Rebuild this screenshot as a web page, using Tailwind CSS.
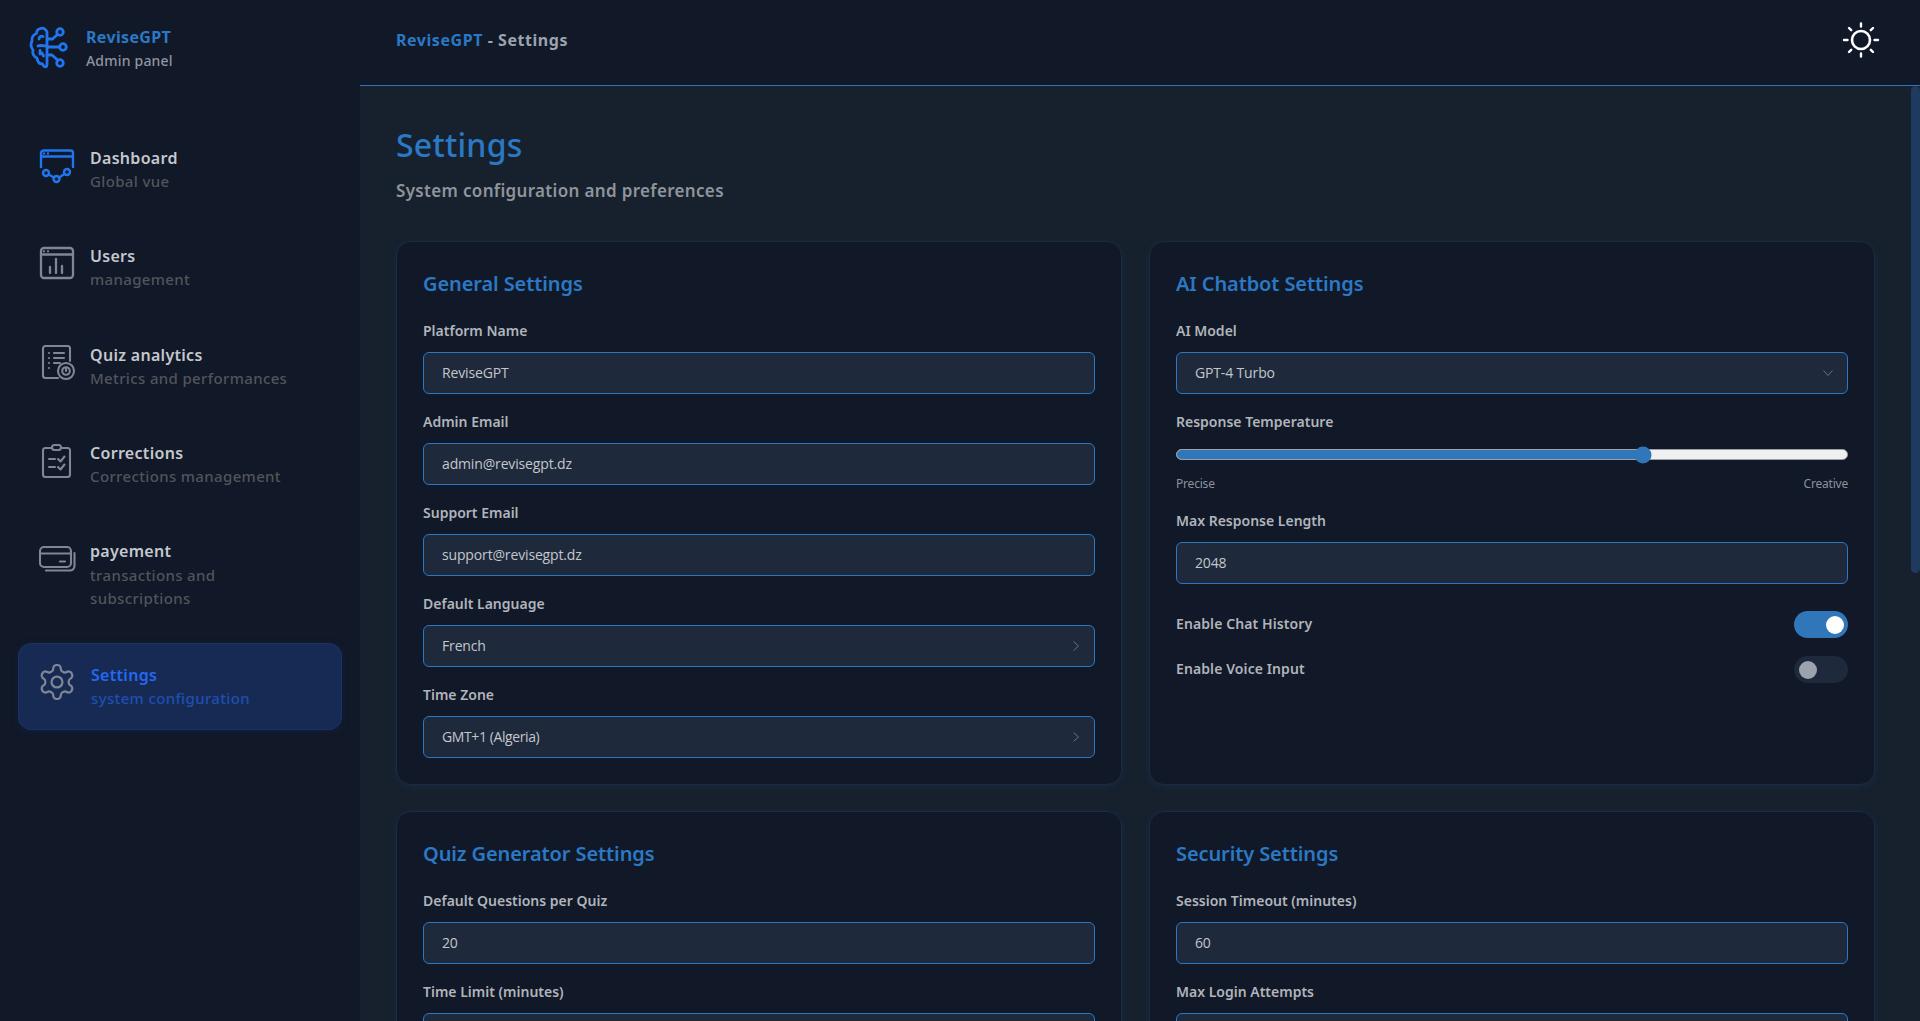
<!DOCTYPE html>
<html lang="en">
<head>
    <meta charset="UTF-8">
    <title>ReviseGPT - Settings</title>
    <script src="https://cdn.jsdelivr.net/npm/@tailwindcss/browser@4"></script>
</head>
<body class="h-screen overflow-hidden bg-[#111827] font-['Noto_Sans',sans-serif]">
<div class="flex h-full">

    <!-- Sidebar -->
    <aside class="w-[360px] shrink-0 h-full bg-[#111827]">
        <div class="flex items-start pl-[30px] pt-[26px] h-[126px]">
            <svg class="w-[38px] h-[44px] overflow-visible" viewBox="0 0 38 44" fill="none" stroke="#2176f0" stroke-width="2.800" stroke-linecap="round" stroke-linejoin="round">
                <path d="M17 6C16 3 13 1.500 10.500 2.500C8 3 6.500 5 6.500 7.500C3.500 8.500 1.500 11.500 2 15C.5 18 1 21.500 3 24C2 27.500 4 31 7 32C7.500 36 10 38 12.500 38C14 41.500 17 42 17 38V6Z"/>
                <path d="M9 13C9 10.500 11 9.500 13 10.500M8 20C10 19 12.500 19.500 17 20M10 28V24.500M13.500 30L12 27"/>
                <path d="M17 13H22.500L27.500 8.500M17 21H29.500M17 29H22L27.500 34"/>
                <circle cx="30" cy="6" r="3.300"/><circle cx="33" cy="21" r="3.300"/><circle cx="30" cy="37" r="3.300"/>
            </svg>
            <div class="ml-[18px] -mt-[1px]">
                <p class="text-[16px] leading-[24px] font-bold tracking-[0.35px] text-[#2b78c5]">ReviseGPT</p>
                <p class="text-[14px] leading-[23px] font-medium tracking-[0.2px] text-[#8f95a0]">Admin panel</p>
            </div>
        </div>

        <nav class="flex flex-col gap-[11px] px-[18px]">
            <a class="flex gap-[16px] pl-[20px] py-[20px]">
                <svg class="w-9 h-9 shrink-0 overflow-visible" viewBox="0 0 36 36" fill="none" stroke="#2176f0" stroke-width="2.400" stroke-linecap="round" stroke-linejoin="round">
                    <path d="M3 21V7A2.500 2.500 0 0 1 5.500 4.500H32.500A2.500 2.500 0 0 1 35 7V21M3 10.500H35"/>
                    <path d="M6 7.500h.01M10 7.500h.01"/>
                    <circle cx="8" cy="27" r="3"/><circle cx="18.500" cy="33" r="3"/><circle cx="29" cy="26" r="3"/>
                    <path d="M10.700 28.500L16 31.500M21 31.500L26.500 28"/>
                </svg>
                <div>
                    <p class="text-[16px] leading-[24px] font-semibold tracking-[0.3px] text-[#c4c8ce]">Dashboard</p>
                    <p class="text-[15px] leading-[23.300px] font-medium tracking-[0.35px] text-[#50555c]">Global vue</p>
                </div>
            </a>
            <a class="flex gap-[16px] pl-[20px] py-[20px]">
                <svg class="w-9 h-9 shrink-0 overflow-visible" viewBox="0 0 36 36" fill="none" stroke="#7f8694" stroke-width="2.300" stroke-linecap="round" stroke-linejoin="round">
                    <rect x="3" y="4" width="32" height="30" rx="3"/>
                    <path d="M3 10.500H35M6 7.300h.01M10 7.300h.01"/>
                    <path d="M12 29V23M18 29V15M24 29V22"/>
                </svg>
                <div>
                    <p class="text-[16px] leading-[24px] font-semibold tracking-[0.3px] text-[#c4c8ce]">Users</p>
                    <p class="text-[15px] leading-[23.300px] font-medium tracking-[0.35px] text-[#50555c]">management</p>
                </div>
            </a>
            <a class="flex gap-[16px] pl-[20px] py-[20px]">
                <svg class="w-9 h-9 shrink-0 overflow-visible" viewBox="0 0 36 36" fill="none" stroke="#7f8694" stroke-width="2.100" stroke-linecap="round" stroke-linejoin="round">
                    <path d="M20 35H7.500A2.500 2.500 0 0 1 5 32.500V5.500A2.500 2.500 0 0 1 7.500 3H29.500A2.500 2.500 0 0 1 32 5.500V18"/>
                    <path d="M11 10h.01M11 15h.01M11 20h.01M11 25h.01M16 10H26M16 15H26M16 20H22"/>
                    <circle cx="28" cy="28" r="8"/><circle cx="28" cy="28" r="3.800"/>
                    <path d="M28 25.500V28"/>
                </svg>
                <div>
                    <p class="text-[16px] leading-[24px] font-semibold tracking-[0.3px] text-[#c4c8ce]">Quiz analytics</p>
                    <p class="text-[15px] leading-[23.300px] font-medium tracking-[0.35px] text-[#50555c]">Metrics and performances</p>
                </div>
            </a>
            <a class="flex gap-[16px] pl-[20px] py-[20px]">
                <svg class="w-9 h-9 shrink-0 overflow-visible" viewBox="0 0 36 36" fill="none" stroke="#7f8694" stroke-width="2.100" stroke-linecap="round" stroke-linejoin="round">
                    <rect x="5" y="7" width="27" height="29" rx="2.500"/>
                    <rect x="14" y="4" width="9" height="5" rx="2.500" fill="#111827"/>
                    <path d="M11 18H17M11 26H17M20 18L22.500 20.500L26.500 15.500M20 26L22.500 28.500L26.500 23.500"/>
                </svg>
                <div>
                    <p class="text-[16px] leading-[24px] font-semibold tracking-[0.3px] text-[#c4c8ce]">Corrections</p>
                    <p class="text-[15px] leading-[23.300px] font-medium tracking-[0.35px] text-[#50555c]">Corrections management</p>
                </div>
            </a>
            <a class="flex gap-[16px] pl-[20px] pb-[22px]">
                <svg class="w-9 h-9 mt-[20px] shrink-0 overflow-visible" viewBox="0 0 36 36" fill="none" stroke="#7f8694" stroke-width="2.100" stroke-linecap="round" stroke-linejoin="round">
                    <rect x="2" y="8" width="31" height="20" rx="4"/>
                    <path d="M2 14.500H33M22 22.500H27M8 31.500H32A4.500 4.500 0 0 0 36.500 27V14"/>
                </svg>
                <div class="pt-[20px]">
                    <p class="text-[16px] leading-[24px] mb-[1px] font-semibold tracking-[0.3px] text-[#c4c8ce]">payement</p>
                    <p class="text-[15px] leading-[23.300px] font-medium tracking-[0.35px] text-[#50555c] w-[190px]">transactions and subscriptions</p>
                </div>
            </a>
            <a class="flex gap-[17px] pl-[19px] py-[19px] -mt-[1px] border border-[#1b3268] rounded-[13px] bg-[#172a54] shadow-[0_2px_8px_rgba(30,64,175,0.15)]">
                <svg class="w-9 h-9 shrink-0 overflow-visible" viewBox="0 0 36 36" fill="none" stroke="#7f8694" stroke-width="1.300" stroke-linecap="round" stroke-linejoin="round">
                    <g transform="translate(19 19) scale(1.7) translate(-12 -12)">
                        <path d="M12.220 2h-.44a2 2 0 0 0-2 2v.18a2 2 0 0 1-1 1.730l-.43.25a2 2 0 0 1-2 0l-.15-.08a2 2 0 0 0-2.730.73l-.22.38a2 2 0 0 0 .73 2.730l.15.1a2 2 0 0 1 1 1.720v.51a2 2 0 0 1-1 1.740l-.15.09a2 2 0 0 0-.73 2.730l.22.38a2 2 0 0 0 2.730.73l.15-.08a2 2 0 0 1 2 0l.43.25a2 2 0 0 1 1 1.730V20a2 2 0 0 0 2 2h.44a2 2 0 0 0 2-2v-.18a2 2 0 0 1 1-1.730l.43-.25a2 2 0 0 1 2 0l.15.08a2 2 0 0 0 2.730-.73l.22-.39a2 2 0 0 0-.73-2.730l-.15-.08a2 2 0 0 1-1-1.740v-.5a2 2 0 0 1 1-1.740l.15-.09a2 2 0 0 0 .73-2.730l-.22-.38a2 2 0 0 0-2.730-.73l-.15.08a2 2 0 0 1-2 0l-.43-.25a2 2 0 0 1-1-1.730V4a2 2 0 0 0-2-2z"/>
                        <circle cx="12" cy="12" r="3.200"/>
                    </g>
                </svg>
                <div>
                    <p class="text-[16px] leading-[24px] font-semibold tracking-[0.3px] text-[#2468f2]">Settings</p>
                    <p class="text-[15px] leading-[23.300px] font-medium tracking-[0.35px] text-[#1f4fb0]">system configuration</p>
                </div>
            </a>
        </nav>
    </aside>

    <div class="flex-1 min-w-0 h-full flex flex-col">
        <!-- Header -->
        <header class="h-[86px] shrink-0 flex items-center justify-between pl-[36px] pr-[39px] bg-[#111827] border-b border-[#2f74b5]">
            <p class="text-[16px] font-bold tracking-[0.55px] text-[#9ca3af] -mt-[5px]"><span class="text-[#2b78c5]">ReviseGPT</span> - Settings</p>
            <svg class="w-10 h-10 -mt-[6px]" viewBox="0 0 40 40" fill="none" stroke="#fff" stroke-linecap="round">
                <circle cx="20" cy="20" r="9" stroke-width="2.600"/>
                <path stroke-width="2.400" d="M20 3.500V6.500M20 33.500V36.500M3 20H6.500M33.500 20H37M8 8L10.200 10.200M32 8L29.800 10.200M8 32L10.200 29.800M32 32L29.800 29.800"/>
            </svg>
        </header>

        <!-- Main, scrollbar thumb drawn by hand since headless hides the real one -->
        <main class="relative flex-1 overflow-hidden bg-[#17212d]">
            <div class="absolute right-0 top-0 w-[9px] h-[487px] rounded-[5px] bg-[#1e3a5f]"></div>
            <div class="pl-[36px] pr-[45px] pt-[35px]">
                <h1 class="text-[32px] leading-[48px] font-medium tracking-[0.25px] text-[#2b78c5]">Settings</h1>
                <p class="text-[17px] leading-[24px] font-semibold tracking-[0.33px] text-[#8f949c] mt-[10px]">System configuration and preferences</p>

                <div class="grid grid-cols-2 gap-x-[27px] gap-y-[26px] mt-[38px]">
                    <!-- General -->
                    <section class="h-[544px] rounded-[15px] border border-[#1a2b42] bg-[#111827] p-[26px] shadow-[0_2px_6px_rgba(30,64,120,0.25)]">
                        <h2 class="text-[20px] leading-[32px] font-semibold tracking-[-0.1px] text-[#2b78c5] mb-[20px]">General Settings</h2>
                        <div class="flex flex-col gap-[17px]">
                            <div>
                                <label class="block text-[14px] leading-[21px] font-semibold text-[#b0b4bb] mb-[11px]">Platform Name</label>
                                <input value="ReviseGPT" class="w-full h-[42px] px-[18px] pb-[2px] rounded-[6px] border border-[#2b78c5] bg-[#1e293b] font-['Open_Sans',sans-serif] text-[14px] tracking-[-0.15px] text-[#c3c7cd] outline-none">
                            </div>
                            <div>
                                <label class="block text-[14px] leading-[21px] font-semibold text-[#b0b4bb] mb-[11px]">Admin Email</label>
                                <input value="admin@revisegpt.dz" class="w-full h-[42px] px-[18px] pb-[2px] rounded-[6px] border border-[#2b78c5] bg-[#1e293b] font-['Open_Sans',sans-serif] text-[14px] tracking-[-0.15px] text-[#c3c7cd] outline-none">
                            </div>
                            <div>
                                <label class="block text-[14px] leading-[21px] font-semibold text-[#b0b4bb] mb-[11px]">Support Email</label>
                                <input value="support@revisegpt.dz" class="w-full h-[42px] px-[18px] pb-[2px] rounded-[6px] border border-[#2b78c5] bg-[#1e293b] font-['Open_Sans',sans-serif] text-[14px] tracking-[-0.15px] text-[#c3c7cd] outline-none">
                            </div>
                            <div>
                                <label class="block text-[14px] leading-[21px] font-semibold text-[#b0b4bb] mb-[11px]">Default Language</label>
                                <div class="flex items-center justify-between h-[42px] pl-[18px] pr-[15px] rounded-[6px] border border-[#2b78c5] bg-[#1e293b] font-['Open_Sans',sans-serif] text-[14px] tracking-[-0.15px] text-[#c3c7cd]">
                                    <span class="-mt-[2px]">French</span>
                                    <svg class="w-[6px] h-[10px]" viewBox="0 0 6 10" fill="none" stroke="#6b7280" stroke-width="1"><path d="M.5 .5L5.500 5L.5 9.500"/></svg>
                                </div>
                            </div>
                            <div>
                                <label class="block text-[14px] leading-[21px] font-semibold text-[#b0b4bb] mb-[11px]">Time Zone</label>
                                <div class="flex items-center justify-between h-[42px] pl-[18px] pr-[15px] rounded-[6px] border border-[#2b78c5] bg-[#1e293b] font-['Open_Sans',sans-serif] text-[14px] tracking-[-0.4px] text-[#c3c7cd]">
                                    <span class="-mt-[2px]">GMT+1 (Algeria)</span>
                                    <svg class="w-[6px] h-[10px]" viewBox="0 0 6 10" fill="none" stroke="#6b7280" stroke-width="1"><path d="M.5 .5L5.500 5L.5 9.500"/></svg>
                                </div>
                            </div>
                        </div>
                    </section>

                    <!-- AI Chatbot -->
                    <section class="h-[544px] rounded-[15px] border border-[#1a2b42] bg-[#111827] p-[26px] shadow-[0_2px_6px_rgba(30,64,120,0.25)]">
                        <h2 class="text-[20px] leading-[32px] font-semibold tracking-[-0.1px] text-[#2b78c5] mb-[20px]">AI Chatbot Settings</h2>
                        <label class="block text-[14px] leading-[21px] font-semibold text-[#b0b4bb] mb-[11px]">AI Model</label>
                        <div class="flex items-center justify-between h-[42px] pl-[18px] pr-[14px] rounded-[6px] border border-[#2b78c5] bg-[#1e293b] font-['Open_Sans',sans-serif] text-[14px] tracking-[-0.15px] text-[#c3c7cd]">
                            <span class="-mt-[2px]">GPT-4 Turbo</span>
                            <svg class="w-[10px] h-[6px]" viewBox="0 0 10 6" fill="none" stroke="#6b7280" stroke-width="1"><path d="M.5 .5L5 5.500L9.500 .5"/></svg>
                        </div>
                        <label class="block text-[14px] leading-[21px] font-semibold text-[#b0b4bb] mt-[17px]">Response Temperature</label>
                        <div class="relative h-[11px] mt-[17px] rounded-full bg-[#f0f0f0] border-[0.5px] border-[#9aa0a8]">
                            <div class="h-full w-[69.6%] rounded-full bg-[#2f77b8]"></div>
                            <div class="absolute left-[69.6%] top-1/2 -translate-x-1/2 -translate-y-1/2 w-[17px] h-[17px] rounded-full bg-[#2f77b8]"></div>
                        </div>
                        <div class="flex justify-between mt-[15px] text-[12px] leading-[18px] tracking-[-0.2px] text-[#8b929c]">
                            <span>Precise</span><span>Creative</span>
                        </div>
                        <label class="block text-[14px] leading-[21px] font-semibold text-[#b0b4bb] mt-[17px] mb-[11px]">Max Response Length</label>
                        <input value="2048" class="w-full h-[42px] px-[18px] pb-[2px] rounded-[6px] border border-[#2b78c5] bg-[#1e293b] font-['Open_Sans',sans-serif] text-[14px] tracking-[-0.15px] text-[#c3c7cd] outline-none">
                        <div class="flex items-center justify-between mt-[27px] h-[27px]">
                            <span class="-mt-[2px] text-[14px] font-semibold tracking-[0.1px] text-[#b0b4bb]">Enable Chat History</span>
                            <div class="relative w-[54px] h-[27px] rounded-full bg-[#2f77b8]">
                                <div class="absolute right-[4px] top-[5px] w-[18px] h-[18px] rounded-full bg-white"></div>
                            </div>
                        </div>
                        <div class="flex items-center justify-between mt-[18px] h-[27px]">
                            <span class="-mt-[2px] text-[14px] font-semibold tracking-[0.1px] text-[#b0b4bb]">Enable Voice Input</span>
                            <div class="relative w-[54px] h-[27px] rounded-full bg-[#1e293b]">
                                <div class="absolute left-[5px] top-[5px] w-[18px] h-[18px] rounded-full bg-[#9ca3af]"></div>
                            </div>
                        </div>
                    </section>

                    <!-- Quiz generator -->
                    <section class="rounded-[15px] border border-[#1a2b42] bg-[#111827] p-[26px] shadow-[0_2px_6px_rgba(30,64,120,0.25)]">
                        <h2 class="text-[20px] leading-[32px] font-semibold tracking-[-0.1px] text-[#2b78c5] mb-[20px]">Quiz Generator Settings</h2>
                        <div class="flex flex-col gap-[17px]">
                            <div>
                                <label class="block text-[14px] leading-[21px] font-semibold text-[#b0b4bb] mb-[11px]">Default Questions per Quiz</label>
                                <input value="20" class="w-full h-[42px] px-[18px] pb-[2px] rounded-[6px] border border-[#2b78c5] bg-[#1e293b] font-['Open_Sans',sans-serif] text-[14px] tracking-[-0.15px] text-[#c3c7cd] outline-none">
                            </div>
                            <div>
                                <label class="block text-[14px] leading-[21px] font-semibold text-[#b0b4bb] mb-[11px]">Time Limit (minutes)</label>
                                <div class="w-full h-[42px] rounded-[6px] border border-[#2b78c5] bg-[#1e293b]"></div>
                            </div>
                        </div>
                    </section>

                    <!-- Security -->
                    <section class="rounded-[15px] border border-[#1a2b42] bg-[#111827] p-[26px] shadow-[0_2px_6px_rgba(30,64,120,0.25)]">
                        <h2 class="text-[20px] leading-[32px] font-semibold tracking-[-0.1px] text-[#2b78c5] mb-[20px]">Security Settings</h2>
                        <div class="flex flex-col gap-[17px]">
                            <div>
                                <label class="block text-[14px] leading-[21px] font-semibold text-[#b0b4bb] mb-[11px]">Session Timeout (minutes)</label>
                                <input value="60" class="w-full h-[42px] px-[18px] pb-[2px] rounded-[6px] border border-[#2b78c5] bg-[#1e293b] font-['Open_Sans',sans-serif] text-[14px] tracking-[-0.15px] text-[#c3c7cd] outline-none">
                            </div>
                            <div>
                                <label class="block text-[14px] leading-[21px] font-semibold text-[#b0b4bb] mb-[11px]">Max Login Attempts</label>
                                <div class="w-full h-[42px] rounded-[6px] border border-[#2b78c5] bg-[#1e293b]"></div>
                            </div>
                        </div>
                    </section>
                </div>
            </div>
        </main>
    </div>
</div>
</body>
</html>
